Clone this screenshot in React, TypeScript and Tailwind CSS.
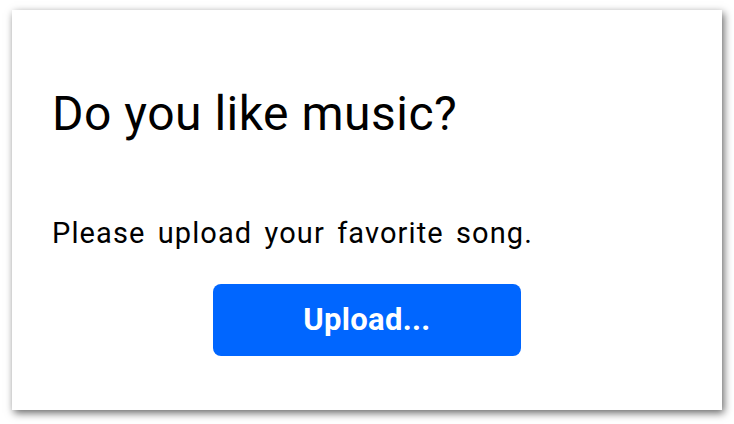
import React from "react";

export default function App() {
  return (
    <div className="w-[734px] h-[424px] bg-white pt-[10px] pl-[12px]" style={{ fontFamily: "Roboto, 'Liberation Sans', sans-serif" }}>
      <div className="w-[710px] h-[400px] bg-white shadow-[2px_3px_8px_rgba(0,0,0,0.6)] flex flex-col pl-[40px]">
        <h1 className="mt-[76px] text-[48px] leading-[56px] tracking-[0.5px] text-black font-normal">Do you like music?</h1>
        <p className="mt-[75px] text-[29px] leading-[32px] tracking-[1.1px] [word-spacing:4px] text-black">Please upload your favorite song.</p>
        <div className="flex justify-center pr-[40px] mt-[35px]">
          <button className="w-[308px] h-[72px] rounded-[8px] bg-[#0066ff] text-white font-bold text-[31px] tracking-[0.3px]">Upload...</button>
        </div>
      </div>
    </div>
  );
}
